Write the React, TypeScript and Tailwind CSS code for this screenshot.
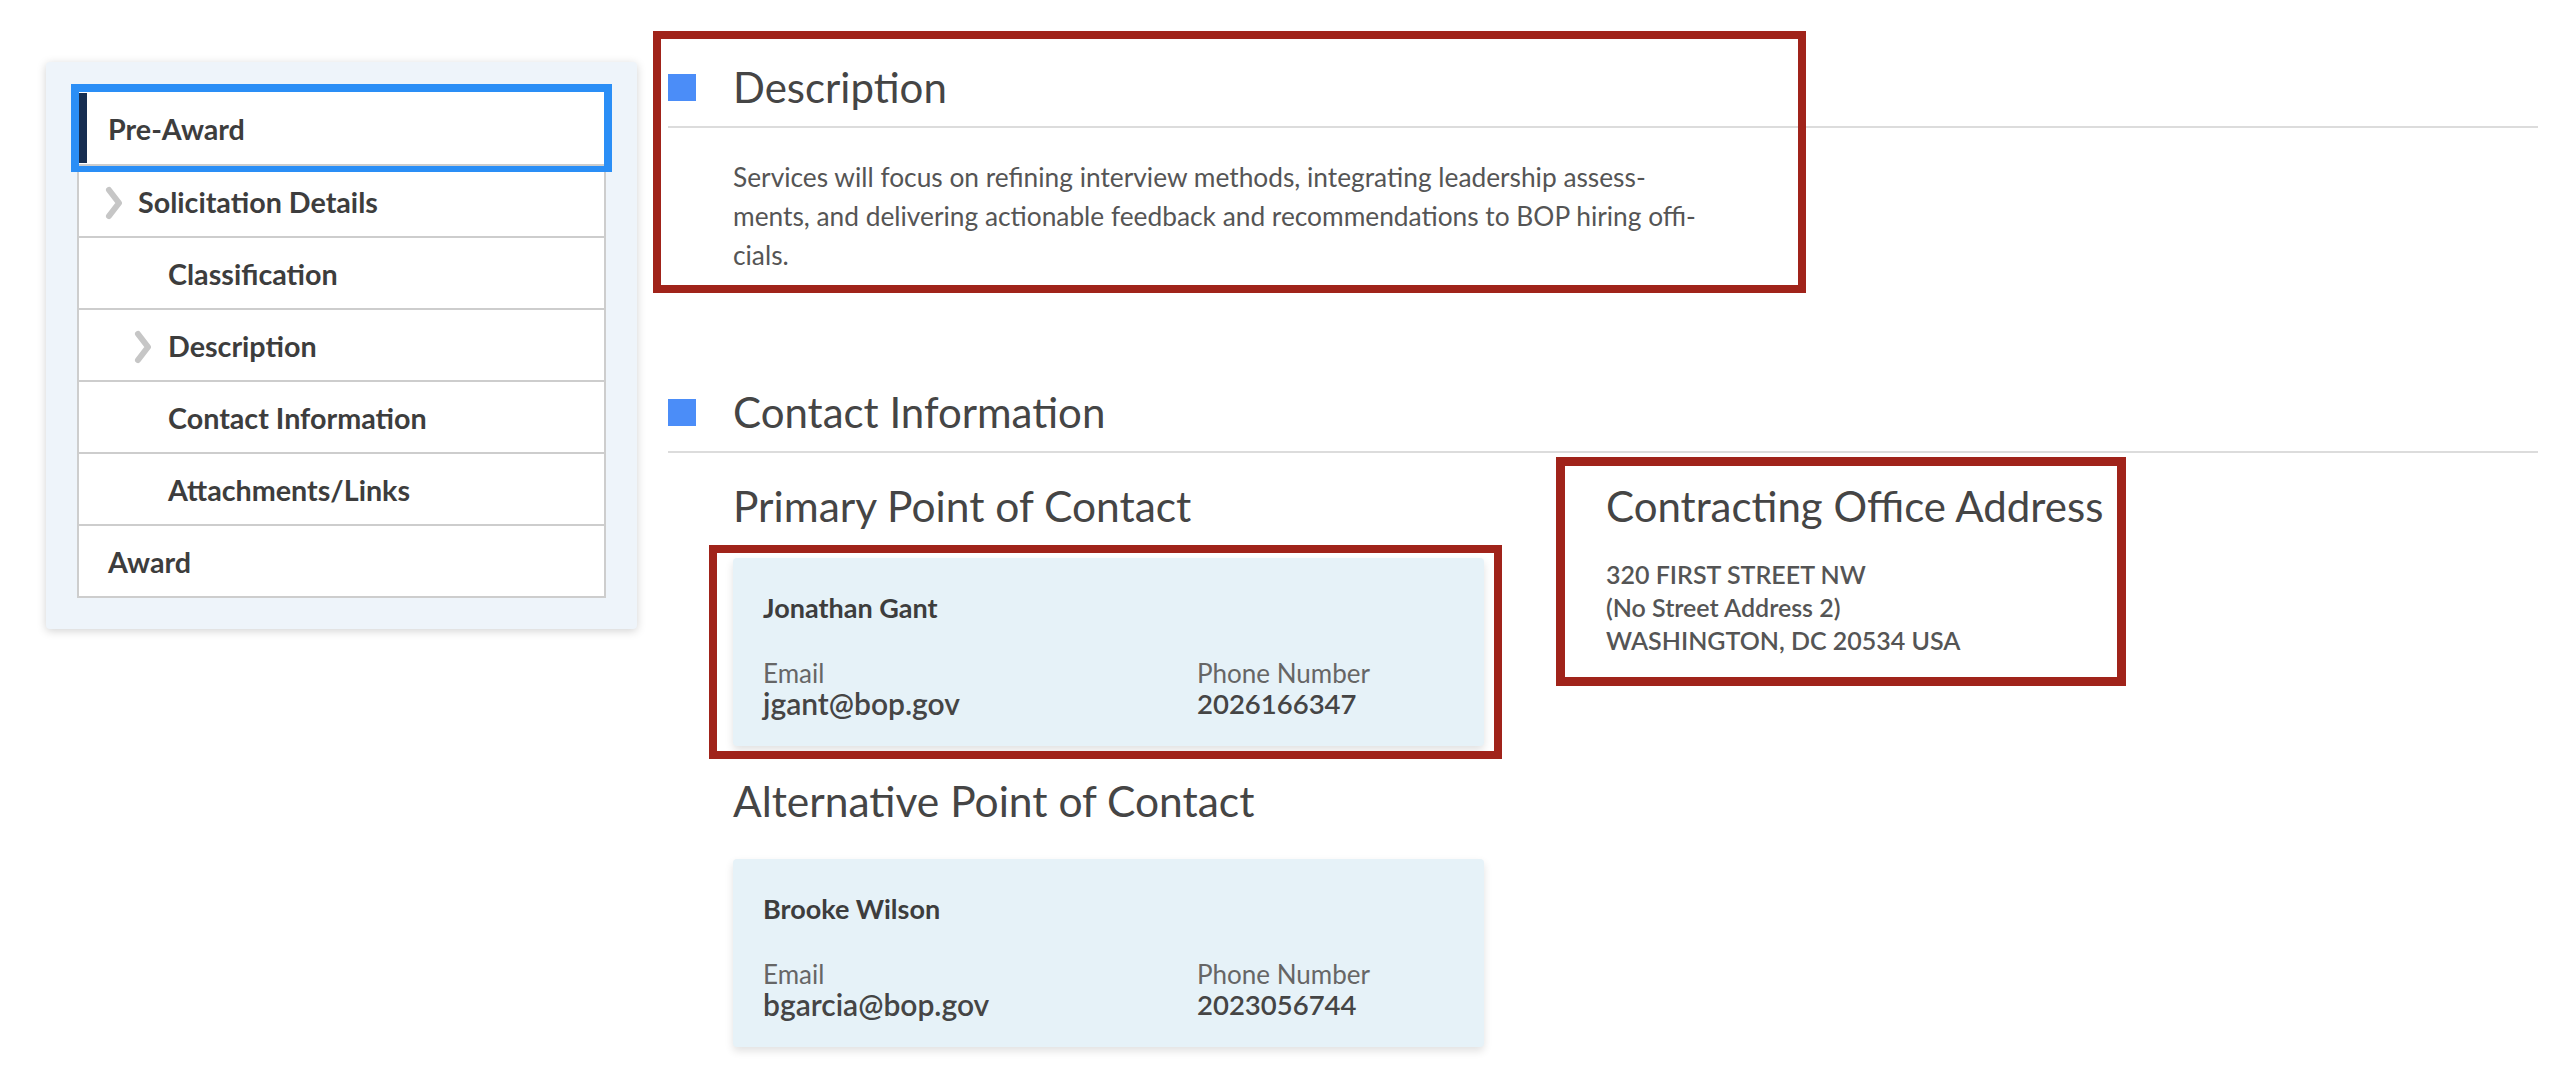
import React from 'react';

type NavItem = {
  label: string;
  level: 1 | 2 | 3;
  chevron?: boolean;
  current?: boolean;
};

const NAV: NavItem[] = [
  { label: 'Pre-Award', level: 1, current: true },
  { label: 'Solicitation Details', level: 2, chevron: true },
  { label: 'Classification', level: 3 },
  { label: 'Description', level: 3, chevron: true },
  { label: 'Contact Information', level: 3 },
  { label: 'Attachments/Links', level: 3 },
  { label: 'Award', level: 1 },
];

const Chevron = () => (
  <svg width="18" height="34" viewBox="0 0 18 34" className="shrink-0">
    <polyline
      points="4,4 14,17 4,30"
      fill="none"
      stroke="#c6c6c6"
      strokeWidth="6"
      strokeLinecap="round"
      strokeLinejoin="round"
    />
  </svg>
);

const SideNav = () => (
  <div className="w-[591px] shrink-0 bg-[#eef4fa] rounded-[4px] shadow-[0_2px_10px_rgba(0,0,0,0.18)] px-[31px] pt-[30px] pb-[31px]">
    <ul className="bg-white border-x-2 border-b-2 border-[#cdcdcd]">
      {NAV.map((item, i) => {
        let pad = 'pl-[29px]';
        if (item.level === 2) pad = 'pl-[26px] gap-[15px]';
        if (item.level === 3) pad = item.chevron ? 'pl-[55px] gap-[16px]' : 'pl-[89px]';
        return (
          <li
            key={item.label}
            className={
              'relative flex items-center h-[72px] pt-[4px] text-[28.7px] font-bold text-[#3d3d3d] ' +
              pad +
              (i > 0 ? ' border-t-2 border-[#cdcdcd]' : '') +
              (item.current ? ' outline-[8px] outline-[#2a8ef6] outline-solid' : '')
            }
          >
            {item.current && <span className="absolute left-0 top-[1px] bottom-[1px] w-[8px] bg-[#162e51]" />}
            {item.chevron && <Chevron />}
            <span>{item.label}</span>
          </li>
        );
      })}
    </ul>
  </div>
);

const SectionHeader = ({ title }: { title: string }) => (
  <div className="flex items-center gap-[37px] border-b-2 border-[#dcdcdc] pb-[14px]">
    <span className="w-[28px] h-[27px] bg-[#4b8df8] shrink-0" />
    <h2 className="text-[42px] leading-[50px] text-[#454545]">{title}</h2>
  </div>
);

const RedBox = ({ className }: { className: string }) => (
  <div className={'absolute border-[8px] border-[#a0231a] pointer-events-none ' + className} />
);

type Contact = { name: string; email: string; phone: string };

const ContactCard = ({ c }: { c: Contact }) => (
  <div className="w-[751px] bg-[#e6f2f8] rounded-[4px] shadow-[0_4px_8px_rgba(0,0,0,0.12)] px-[30px] pt-[33px] pb-[27px]">
    <div className="text-[27px] leading-[33px] font-bold text-[#3d3d3d]">{c.name}</div>
    <div className="flex mt-[35px]">
      <div className="w-[434px]">
        <div className="text-[26px] leading-[29px] text-[#666666]">Email</div>
        <div className="text-[30px] leading-[31px] font-semibold text-[#454545]">{c.email}</div>
      </div>
      <div>
        <div className="text-[26px] leading-[29px] text-[#666666]">Phone Number</div>
        <div className="text-[27.5px] leading-[31px] font-semibold text-[#454545]">{c.phone}</div>
      </div>
    </div>
  </div>
);

export default function App() {
  return (
    <div className="min-h-screen bg-white flex items-start pl-[46px] pt-[62px] font-['Lato','Noto_Sans',sans-serif]">
      <SideNav />

      <main className="flex-1 ml-[31px] mr-[22px]">
        {/* Description */}
        <section className="relative">
          <SectionHeader title="Description" />
          <p className="ml-[65px] mt-[30px] text-[26.3px] leading-[39px] text-[#555555]">
            Services will focus on refining interview methods, integrating leadership assess-
            <br />
            ments, and delivering actionable feedback and recommendations to BOP hiring offi-
            <br />
            cials.
          </p>
          <RedBox className="-left-[15px] -top-[31px] w-[1153px] h-[262px] border-[7px]" />
        </section>

        {/* Contact Information */}
        <section className="mt-[112px]">
          <SectionHeader title="Contact Information" />
          <div className="flex ml-[65px] gap-[122px]">
            <div>
              <h3 className="mt-[28px] text-[42.5px] leading-[50px] text-[#454545]">Primary Point of Contact</h3>
              <div className="relative mt-[27px]">
                <ContactCard c={{ name: 'Jonathan Gant', email: 'jgant@bop.gov', phone: '2026166347' }} />
                <RedBox className="-left-[24px] -top-[13px] w-[793px] h-[214px]" />
              </div>
              <h3 className="mt-[30px] text-[42.5px] leading-[50px] text-[#454545]">Alternative Point of Contact</h3>
              <div className="mt-[33px]">
                <ContactCard c={{ name: 'Brooke Wilson', email: 'bgarcia@bop.gov', phone: '2023056744' }} />
              </div>
            </div>

            <div className="relative self-start mt-[28px]">
              <h3 className="text-[42px] leading-[50px] text-[#454545]">Contracting Office Address</h3>
              <div className="mt-[27px] text-[25px] leading-[33px] font-semibold text-[#555555]">
                <div>320 FIRST STREET NW</div>
                <div>(No Street Address 2)</div>
                <div>WASHINGTON, DC 20534 USA</div>
              </div>
              <RedBox className="-left-[50px] -top-[24px] w-[570px] h-[229px] border-[9px]" />
            </div>
          </div>
        </section>
      </main>
    </div>
  );
}
